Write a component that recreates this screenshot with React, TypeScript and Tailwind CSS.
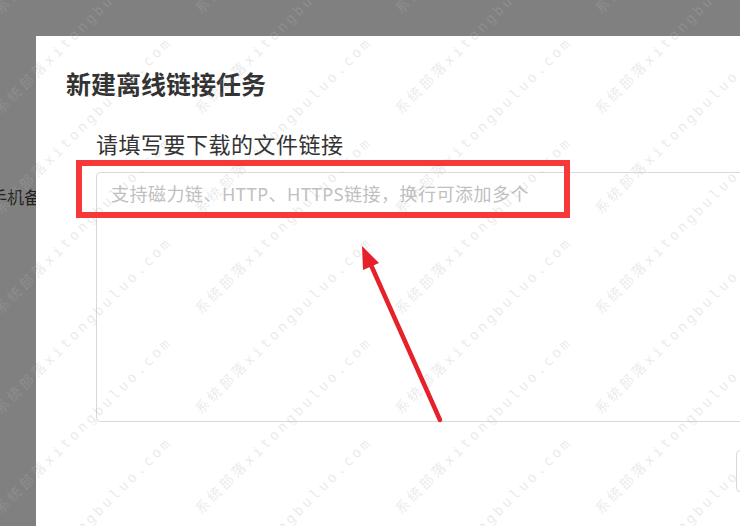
import React from "react";

const marks: { x: number; y: number }[] = [];
for (let r = 0; r < 8; r++) {
  for (let c = 0; c < 4; c++) {
    marks.push({ x: 3 + c * 200, y: 17 + r * 100 });
  }
}

function Watermarks() {
  return (
    <div className="pointer-events-none absolute inset-0 overflow-hidden">
      {marks.map((m, i) => (
        <span
          key={i}
          className="absolute origin-bottom-left -rotate-45 whitespace-nowrap font-['DejaVu_Sans_Mono','Noto_Sans_CJK_SC',monospace] text-[14px] leading-[16px] tracking-[3.2px] text-[rgba(180,180,180,0.28)]"
          style={{ left: m.x, top: m.y - 16 }}
        >
          系统部落xitongbuluo.com
        </span>
      ))}
    </div>
  );
}

function Arrow() {
  return (
    <svg className="pointer-events-none absolute left-0 top-0" width="740" height="526">
      <line x1="440" y1="420" x2="371" y2="265" stroke="#e6212b" strokeWidth="4.5" strokeLinecap="round" />
      <polygon points="362,246 379,263 363,270" fill="#e6212b" />
    </svg>
  );
}

export default function App() {
  return (
    <div className="relative h-[526px] w-[740px] overflow-hidden bg-[#808080] font-['Noto_Sans','Noto_Sans_CJK_SC',sans-serif]">
      {/* page behind the overlay */}
      <div className="pt-[186px] -ml-[10px] text-[17px] leading-[24px] text-[#1f1f1f]">手机备份</div>

      {/* dialog */}
      <div className="absolute left-[36px] top-[36px] h-[500px] w-[720px] bg-white pl-[30px] pt-[33px]">
        <h1 className="text-[25px] font-bold leading-[30px] text-[#333]">新建离线链接任务</h1>
        <div className="ml-[30px] mt-[30px] text-[22px] leading-[30px] tracking-[0.5px] text-[#333]">请填写要下载的文件链接</div>
        <textarea
          readOnly
          className="ml-[30px] mt-[13px] block h-[250px] w-[700px] resize-none rounded-[4px] border border-[#d9d9d9] pl-[14px] pt-[9px] text-[18px] leading-[24px] tracking-[0.5px] outline-none placeholder:text-[#c0c0c0]"
          placeholder="支持磁力链、HTTP、HTTPS链接，换行可添加多个"
        />
        <div className="mt-[28px] flex pl-[670px]">
          <button className="h-[42px] w-[80px] rounded-[4px] border border-[#d9d9d9] bg-white" />
        </div>
      </div>

      <Watermarks />

      {/* annotation */}
      <div className="pointer-events-none absolute left-[76px] top-[160px] h-[58px] w-[494px] border-[6px] border-[#f73838]" />
      <Arrow />
    </div>
  );
}
